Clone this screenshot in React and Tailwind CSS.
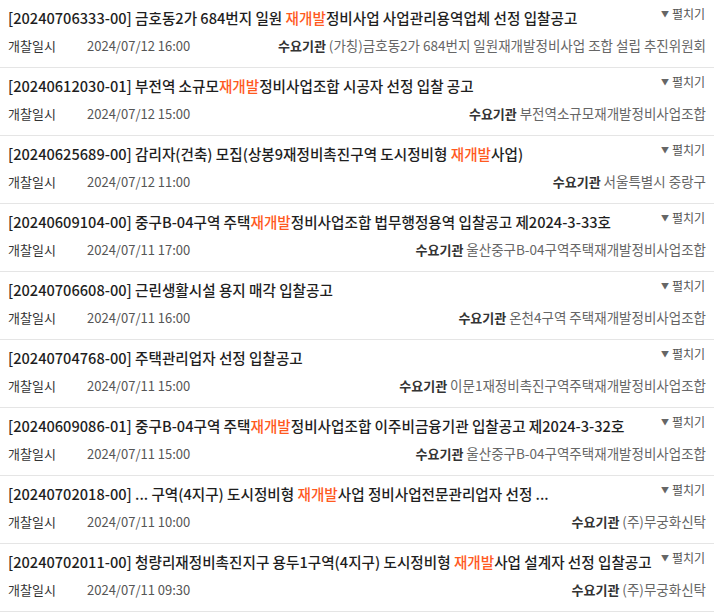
import React from "react";

const rows = [
  {
    no: "20240706333-00",
    pre: "금호동2가 684번지 일원 ",
    hl: "재개발",
    post: "정비사업 사업관리용역업체 선정 입찰공고",
    date: "2024/07/12 16:00",
    org: "(가칭)금호동2가 684번지 일원재개발정비사업 조합 설립 추진위원회",
  },
  {
    no: "20240612030-01",
    pre: "부전역 소규모",
    hl: "재개발",
    post: "정비사업조합 시공자 선정 입찰 공고",
    date: "2024/07/12 15:00",
    org: "부전역소규모재개발정비사업조합",
  },
  {
    no: "20240625689-00",
    pre: "감리자(건축) 모집(상봉9재정비촉진구역 도시정비형 ",
    hl: "재개발",
    post: "사업)",
    date: "2024/07/12 11:00",
    org: "서울특별시 중랑구",
  },
  {
    no: "20240609104-00",
    pre: "중구B-04구역 주택",
    hl: "재개발",
    post: "정비사업조합 법무행정용역 입찰공고 제2024-3-33호",
    date: "2024/07/11 17:00",
    org: "울산중구B-04구역주택재개발정비사업조합",
  },
  {
    no: "20240706608-00",
    pre: "근린생활시설 용지 매각 입찰공고",
    hl: "",
    post: "",
    date: "2024/07/11 16:00",
    org: "온천4구역 주택재개발정비사업조합",
  },
  {
    no: "20240704768-00",
    pre: "주택관리업자 선정 입찰공고",
    hl: "",
    post: "",
    date: "2024/07/11 15:00",
    org: "이문1재정비촉진구역주택재개발정비사업조합",
  },
  {
    no: "20240609086-01",
    pre: "중구B-04구역 주택",
    hl: "재개발",
    post: "정비사업조합 이주비금융기관 입찰공고 제2024-3-32호",
    date: "2024/07/11 15:00",
    org: "울산중구B-04구역주택재개발정비사업조합",
  },
  {
    no: "20240702018-00",
    pre: "... 구역(4지구) 도시정비형 ",
    hl: "재개발",
    post: "사업 정비사업전문관리업자 선정 ...",
    date: "2024/07/11 10:00",
    org: "(주)무궁화신탁",
  },
  {
    no: "20240702011-00",
    pre: "청량리재정비촉진지구 용두1구역(4지구) 도시정비형 ",
    hl: "재개발",
    post: "사업 설계자 선정 입찰공고",
    date: "2024/07/11 09:30",
    org: "(주)무궁화신탁",
  },
];

const BidRow = ({ row }) => (
  <div className="h-[68px] border-b border-[#e5e5e5] px-[8px] pt-[5px]">
    <div className="flex items-start justify-between gap-2">
      <h3 className="min-w-0 text-[14.6px] leading-[26px] font-medium text-[#1e1e1e] whitespace-nowrap">
        [{row.no}] {row.pre}
        {row.hl && <span className="text-[#ff5a1f]">{row.hl}</span>}
        {row.post}
      </h3>
      <button className="flex items-center gap-[3px] text-[12px] leading-[16px] text-[#555] shrink-0 mt-[1px] mr-[1px]">
        <span className="text-[8px] text-[#666]">▼</span>펼치기
      </button>
    </div>
    <div className="flex items-center text-[13px] leading-[28px] whitespace-nowrap">
      <span className="w-[79px] text-[#333]">개찰일시</span>
      <span className="text-[#555]">{row.date}</span>
      <span className="ml-auto">
        <strong className="font-bold text-[#333]">수요기관</strong>{" "}
        <span className="text-[13.5px] text-[#666]">{row.org}</span>
      </span>
    </div>
  </div>
);

export default function App() {
  return (
    <div
      className="w-[714px] bg-white"
      style={{ fontFamily: '"Noto Sans CJK KR", "Noto Sans", sans-serif' }}
    >
      {rows.map((row) => (
        <BidRow key={row.no} row={row} />
      ))}
    </div>
  );
}
